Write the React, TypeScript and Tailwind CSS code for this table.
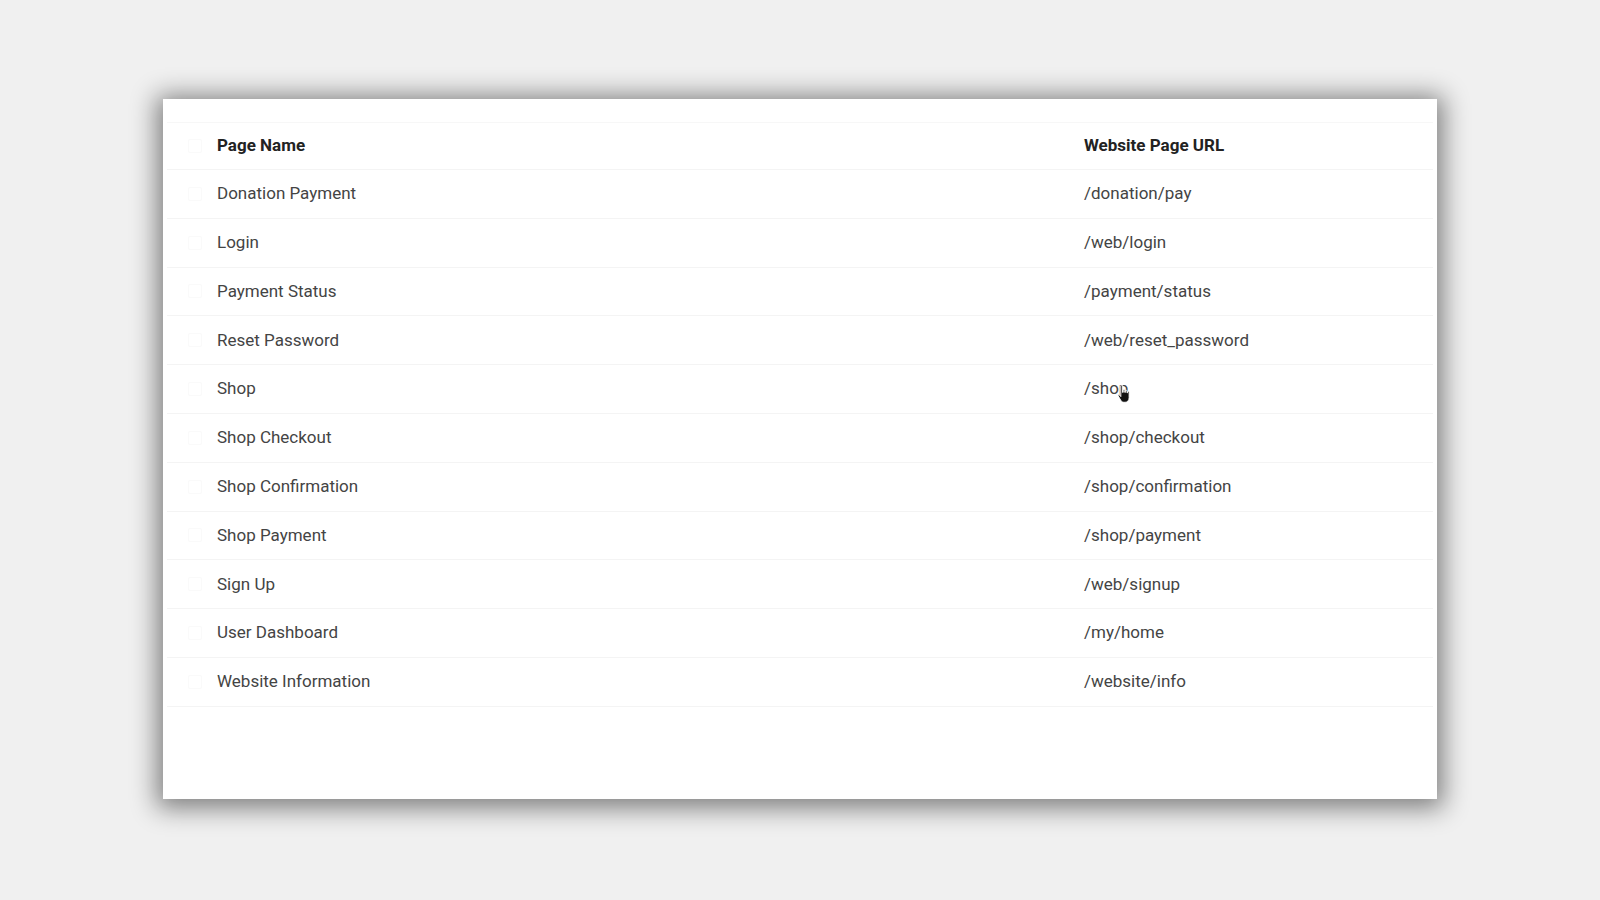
import React from 'react';

const pages = [
    { name: 'Donation Payment', url: '/donation/pay' },
    { name: 'Login', url: '/web/login' },
    { name: 'Payment Status', url: '/payment/status' },
    { name: 'Reset Password', url: '/web/reset_password' },
    { name: 'Shop', url: '/shop' },
    { name: 'Shop Checkout', url: '/shop/checkout' },
    { name: 'Shop Confirmation', url: '/shop/confirmation' },
    { name: 'Shop Payment', url: '/shop/payment' },
    { name: 'Sign Up', url: '/web/signup' },
    { name: 'User Dashboard', url: '/my/home' },
    { name: 'Website Information', url: '/website/info' },
];

// pointer cursor hovering the /shop link
const HandCursor = () => (
    <svg width="17" height="21" viewBox="0 0 16 20" className="absolute left-[32px] top-[8px]">
        <path d="M4.5 1.8c0-1 1.7-1 1.7 0V8h.5V6c0-1 1.6-1 1.6 0v2h.5V6.7c0-1 1.6-1 1.6 0V8.4h.4V7.6c0-1 1.6-1 1.6 0V13c0 2.5-1.4 4.4-3.8 4.4H7.4c-1.5 0-2.3-.7-3-1.9L2 11.3c-.5-.9.7-1.6 1.3-.8l1.2 1.5z" fill="#111" stroke="#fff" strokeWidth="0.9" />
    </svg>
);

export default function App() {
    return (
        <div className="min-h-[900px] w-full bg-[#f0f0f0] pt-[99px] pl-[163px]" style={{ fontFamily: 'Roboto, "Liberation Sans", sans-serif' }}>
            <div className="w-[1274px] h-[700px] bg-white shadow-[0_3px_24px_6px_rgba(0,0,0,0.48)] pt-[23px] pl-[4px] pr-[4px]">
                <div className="border-t border-[#f7f7f7]">
                    <div className="flex items-center h-[47px] border-b border-[#f4f4f4] text-[17px] font-bold text-[#222]">
                        <div className="w-[50px] flex justify-center pl-[6px]">
                            <div className="w-[14px] h-[14px] rounded-[2px] border border-[#fafafa]" />
                        </div>
                        <div className="w-[867px]">Page Name</div>
                        <div>Website Page URL</div>
                    </div>
                    {pages.map((p) => (
                        <div key={p.name} className="flex items-center h-[48.8px] border-b border-[#f4f4f4] text-[17px] text-[#444]">
                            <div className="w-[50px] flex justify-center pl-[6px]">
                                <div className="w-[14px] h-[14px] rounded-[2px] border border-[#fafafa]" />
                            </div>
                            <div className="w-[867px]">{p.name}</div>
                            <div className="relative">
                                {p.url}
                                {p.name === 'Shop' && <HandCursor />}
                            </div>
                        </div>
                    ))}
                </div>
            </div>
        </div>
    );
}
